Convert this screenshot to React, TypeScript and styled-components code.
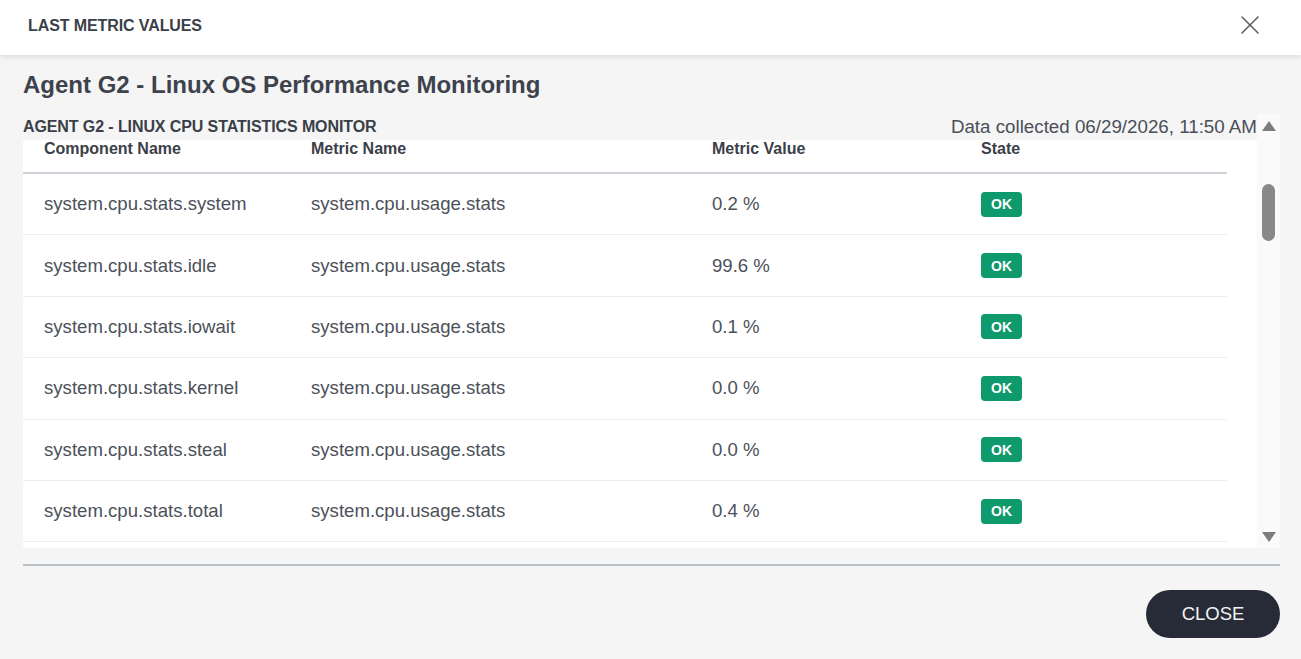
import styled, { createGlobalStyle } from "styled-components";

const GlobalStyle = createGlobalStyle`
    html, body {
        margin: 0;
        padding: 0;
        background: #f5f5f5;
    }

    body {
        font-family: "Liberation Sans", Arial, sans-serif;
        color: #3d424c;
    }

    * {
        box-sizing: border-box;
    }
`;

type Metric = {
    component: string;
    metric: string;
    value: string;
    state: string;
};

const metrics: Metric[] = [
    { component: "system.cpu.stats.system", metric: "system.cpu.usage.stats", value: "0.2 %", state: "OK" },
    { component: "system.cpu.stats.idle", metric: "system.cpu.usage.stats", value: "99.6 %", state: "OK" },
    { component: "system.cpu.stats.iowait", metric: "system.cpu.usage.stats", value: "0.1 %", state: "OK" },
    { component: "system.cpu.stats.kernel", metric: "system.cpu.usage.stats", value: "0.0 %", state: "OK" },
    { component: "system.cpu.stats.steal", metric: "system.cpu.usage.stats", value: "0.0 %", state: "OK" },
    { component: "system.cpu.stats.total", metric: "system.cpu.usage.stats", value: "0.4 %", state: "OK" }
];

const CloseIcon = () => (
    <svg width="18" height="18" viewBox="0 0 18 18" fill="none">
        <path d="M1 1L17 17M17 1L1 17" stroke="#555a63" strokeWidth="1.5" strokeLinecap="round" />
    </svg>
);

const LastMetricValues = () => {
    return (
        <Dialog>
            <GlobalStyle />
            <Header>
                <HeaderTitle>LAST METRIC VALUES</HeaderTitle>
                <IconButton aria-label="close">
                    <CloseIcon />
                </IconButton>
            </Header>
            <Body>
                <Title>Agent G2 - Linux OS Performance Monitoring</Title>
                <ScrollRegion>
                    <ScrollContent>
                        <SectionBar>
                            <SectionTitle>AGENT G2 - LINUX CPU STATISTICS MONITOR</SectionTitle>
                            <Collected>Data collected 06/29/2026, 11:50 AM</Collected>
                        </SectionBar>
                        <TableArea>
                            <Table>
                                <HeadRow>
                                    <HeadCell>Component Name</HeadCell>
                                    <HeadCell>Metric Name</HeadCell>
                                    <HeadCell>Metric Value</HeadCell>
                                    <HeadCell>State</HeadCell>
                                </HeadRow>
                                {metrics.map((m) => (
                                    <Row key={m.component}>
                                        <Cell>{m.component}</Cell>
                                        <Cell>{m.metric}</Cell>
                                        <Cell>{m.value}</Cell>
                                        <Cell>
                                            <StateBadge>{m.state}</StateBadge>
                                        </Cell>
                                    </Row>
                                ))}
                            </Table>
                        </TableArea>
                    </ScrollContent>
                    <ScrollTrack>
                        <Arrow direction="up" />
                        <ThumbLane>
                            <Thumb />
                        </ThumbLane>
                        <Arrow direction="down" />
                    </ScrollTrack>
                </ScrollRegion>
                <Divider />
                <Actions>
                    <CloseButton>CLOSE</CloseButton>
                </Actions>
            </Body>
        </Dialog>
    );
};

const Dialog = styled.div`
    width: 1301px;
    height: 659px;
    background: #f5f5f5;
    display: flex;
    flex-direction: column;
    overflow: hidden;
`;

const Header = styled.header`
    height: 55px;
    flex-shrink: 0;
    padding: 16px 42px 0 28px;

    background: #ffffff;
    box-shadow: 0 2px 5px rgba(0, 0, 0, 0.1);
    position: relative;
    z-index: 1;

    display: flex;
    justify-content: space-between;
    align-items: flex-start;
`;

const HeaderTitle = styled.h1`
    margin: 0;
    padding-top: 1px;
    font-size: 16px;
    line-height: 18px;
    font-weight: 700;
    color: #3a3f48;
    letter-spacing: -0.1px;
`;

const IconButton = styled.button`
    padding: 0;
    border: none;
    background: none;
    display: flex;
`;

const Body = styled.main`
    flex: 1;
    padding: 0 21px 0 23px;
    display: flex;
    flex-direction: column;
`;

const Title = styled.h2`
    margin: 16px 0 15px;
    font-size: 24px;
    line-height: 28px;
    font-weight: 700;
    color: #3d424c;
`;

const ScrollRegion = styled.section`
    height: 434px;
    display: flex;
    overflow: hidden;
`;

const ScrollContent = styled.div`
    flex: 1;
    display: flex;
    flex-direction: column;
    min-width: 0;
`;

const SectionBar = styled.div`
    height: 26px;
    flex-shrink: 0;
    display: flex;
    justify-content: space-between;
    align-items: center;
`;

const SectionTitle = styled.h3`
    margin: 0;
    font-size: 16px;
    font-weight: 700;
    color: #3a3f48;
    letter-spacing: -0.1px;
`;

const Collected = styled.span`
    font-size: 18.75px;
    color: #4a4f58;
`;

const TableArea = styled.div`
    flex: 1;
    background: #ffffff;
    padding-right: 30px;
    overflow: hidden;
`;

const Table = styled.div`
    display: flex;
    flex-direction: column;
`;

const columns = `
    display: grid;
    grid-template-columns: 288px 401px 269px 1fr;
`;

const HeadRow = styled.div`
    ${columns}
    height: 34px;
    border-bottom: 2px solid #cfd4da;
`;

const HeadCell = styled.div`
    font-size: 16px;
    line-height: 18px;
    font-weight: 700;
    color: #3b4049;

    &:first-child {
        padding-left: 21px;
    }
`;

const Row = styled.div`
    ${columns}
    height: 61.4px;
    flex-shrink: 0;
    align-items: center;
    border-bottom: 1px solid #ececec;
`;

const Cell = styled.div`
    font-size: 18.6px;
    color: #4c515a;
    white-space: nowrap;

    &:first-child {
        padding-left: 21px;
    }
`;

const StateBadge = styled.span`
    width: 41px;
    height: 25px;
    border-radius: 4px;
    background: #0f9a6d;
    color: #ffffff;
    font-size: 14px;
    font-weight: 700;

    display: inline-flex;
    justify-content: center;
    align-items: center;
`;

const ScrollTrack = styled.div`
    width: 23px;
    flex-shrink: 0;
    background: #fafafa;
    padding: 7px 0 6px;

    display: flex;
    flex-direction: column;
    align-items: center;
`;

const Arrow = styled.div<{ direction: "up" | "down" }>`
    width: 0;
    height: 0;
    border-left: 7px solid transparent;
    border-right: 7px solid transparent;
    ${(props) =>
        props.direction === "up"
            ? "border-bottom: 10px solid #7c7c7c;"
            : "border-top: 10px solid #7c7c7c;"}
`;

const ThumbLane = styled.div`
    flex: 1;
    width: 100%;
    padding-top: 53px;
    display: flex;
    justify-content: center;
`;

const Thumb = styled.div`
    width: 13px;
    height: 57px;
    border-radius: 7px;
    background: #888888;
`;

const Divider = styled.hr`
    margin: 16px 0 0;
    height: 2px;
    border: none;
    background: #b9bfc6;
`;

const Actions = styled.div`
    padding-top: 24px;
    display: flex;
    justify-content: flex-end;
`;

const CloseButton = styled.button`
    width: 134px;
    height: 48px;
    border: none;
    border-radius: 24px;
    background: #272b38;
    color: #f2f2f2;
    font-family: "Liberation Sans", Arial, sans-serif;
    font-size: 18.5px;
    cursor: pointer;
`;

export default LastMetricValues;
